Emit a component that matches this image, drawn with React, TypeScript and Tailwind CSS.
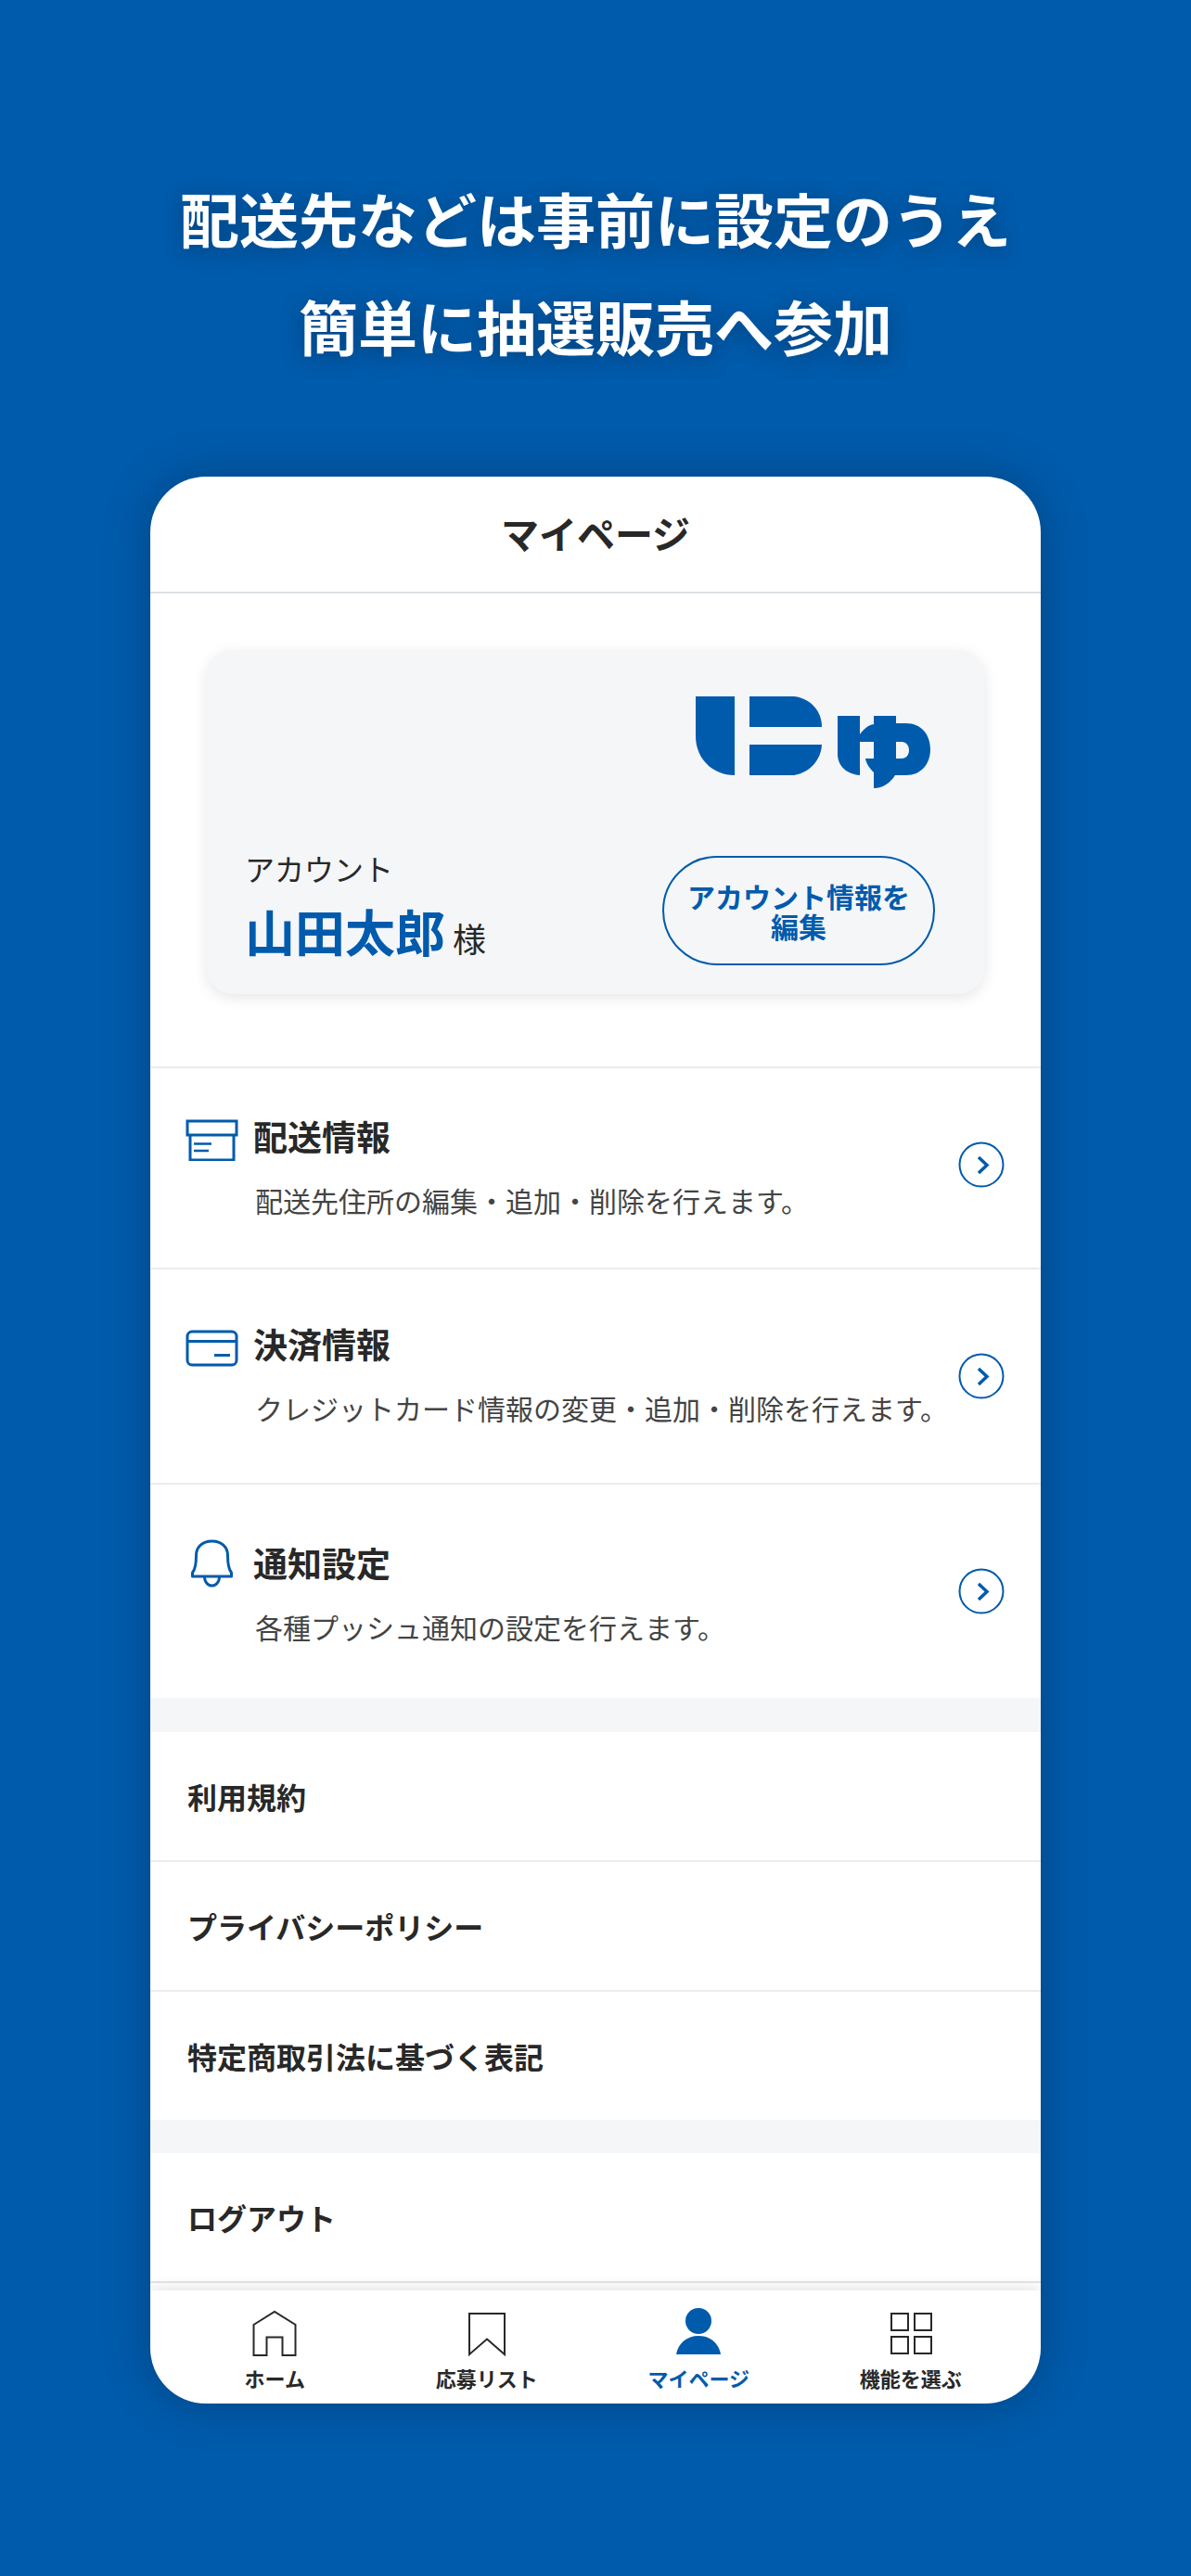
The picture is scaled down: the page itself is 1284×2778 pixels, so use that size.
const FONT = "font-['Noto_Sans_CJK_JP',sans-serif]";

const ShopBoxIcon = () => (
  <svg viewBox="0 0 57 46" className="h-[46px] w-[57px]" fill="none" stroke="currentColor" strokeWidth="3" aria-hidden="true">
    <rect x="2" y="3" width="53" height="15" />
    <path d="M5 18V45H52V18" />
    <path d="M9 27.500H28M9 35H25" strokeWidth="2.500" />
  </svg>
);

const CardIcon = () => (
  <svg viewBox="0 0 57 46" className="h-[46px] w-[57px]" fill="none" stroke="currentColor" strokeWidth="3" aria-hidden="true">
    <rect x="2" y="6" width="53" height="36" rx="5" />
    <path d="M2 16.500H55" />
    <path d="M31 31.500H48" />
  </svg>
);

const BellIcon = () => (
  <svg viewBox="0 0 57 58" className="h-[58px] w-[57px]" fill="none" stroke="currentColor" strokeWidth="3" strokeLinejoin="round" aria-hidden="true">
    <path d="M28.500 2C18 2 11.500 8.500 11.500 17.500C11.500 28 10 33 7.500 36V40H49.500V36C47 33 45.500 28 45.500 17.500C45.500 8.500 39 2 28.500 2Z" />
    <path d="M20.500 41C20.500 45.500 24 50 28.500 50S36.500 45.500 36.500 41" />
  </svg>
);

const HomeIcon = () => (
  <svg viewBox="0 0 50 54" className="h-[54px] w-[50px]" fill="none" stroke="currentColor" strokeWidth="2" aria-hidden="true">
    <path d="M2.500 19L25 5L47.500 19V52H33.500V32.500H16.500V52H2.500Z" />
  </svg>
);

const BookmarkIcon = () => (
  <svg viewBox="0 0 50 54" className="h-[54px] w-[50px]" fill="none" stroke="currentColor" strokeWidth="2" aria-hidden="true">
    <path d="M6 7H44V51L25 34.500L6 51Z" />
  </svg>
);

const PersonIcon = () => (
  <svg viewBox="0 0 50 54" className="h-[54px] w-[50px]" fill="currentColor" aria-hidden="true">
    <circle cx="25" cy="15" r="14" />
    <path d="M1 51C3 39 12.500 31 25 31S47 39 49 51Z" />
  </svg>
);

const GridIcon = () => (
  <svg viewBox="0 0 50 54" className="h-[54px] w-[50px]" fill="none" stroke="currentColor" strokeWidth="2" aria-hidden="true">
    <rect x="4" y="7" width="18" height="18" />
    <rect x="29" y="7" width="18" height="18" />
    <rect x="4" y="32" width="18" height="18" />
    <rect x="29" y="32" width="18" height="18" />
  </svg>
);

const Chevron = () => (
  <svg viewBox="0 0 50 50" className="h-[50px] w-[50px] shrink-0 text-[#005bac]" fill="none" stroke="currentColor" aria-hidden="true">
    <circle cx="25" cy="25" r="23.500" strokeWidth="2" />
    <path d="M22 17L31 25.500L22 34" strokeWidth="3.500" />
  </svg>
);

const Logo = () => (
  <svg viewBox="0 0 254 100" className="h-[100px] w-[254px]" fill="#005bac" role="img" aria-label="にゅ">
    <path d="M0 0H42V85C18 85 0 67 0 43Z" />
    <path d="M58 0H106C123 2 136 15 136 33H58Z" />
    <path d="M58 52H136C135 69 123 82 106 85H58Z" />
    <path d="M153 21H177V41C181 35 186 31 192 30V21H216V29H227C243 29 253 41 253 57S243 85 227 85H215C210 93 202 99 192 99V82C188 78 184 73 183 67H192V49H177V85C163 84 153 75 153 62ZM216 49V67H222C227 67 230 63 230 58S227 49 222 49Z" />
  </svg>
);

const settings = [
  { title: "配送情報", text: "配送先住所の編集・追加・削除を行えます。", Icon: ShopBoxIcon, row: "pb-2", body: "pt-[45px] pb-[42px]" },
  { title: "決済情報", text: "クレジットカード情報の変更・追加・削除を行えます。", Icon: CardIcon, row: "", body: "pt-[52px] pb-[58px]" },
  { title: "通知設定", text: "各種プッシュ通知の設定を行えます。", Icon: BellIcon, row: "", body: "pt-14 pb-[54px]" },
];

const documents = ["利用規約", "プライバシーポリシー", "特定商取引法に基づく表記"];

const tabs = [
  { label: "ホーム", Icon: HomeIcon },
  { label: "応募リスト", Icon: BookmarkIcon },
  { label: "マイページ", Icon: PersonIcon, active: true },
  { label: "機能を選ぶ", Icon: GridIcon },
];

const App = () => {
  return (
    <div lang="ja" className={`${FONT} flex min-h-screen flex-col items-center bg-[#005bac] px-8 pt-[176px] pb-[186px] text-[#282828]`}>
      <h1 className="text-center text-[64px] leading-[116px] font-bold text-white [text-shadow:0_4px_24px_rgba(0,0,0,0.3)]">
        配送先などは事前に設定のうえ
        <br />
        簡単に抽選販売へ参加
      </h1>

      <main className="mt-[106px] w-full max-w-[960px] overflow-hidden rounded-[60px] bg-white shadow-[0_0_50px_rgba(0,0,0,0.25)]">
        <header className="border-b-2 border-[#dce0e4] pt-[30px] pb-[34px]">
          <h2 className="text-center text-[41px] leading-[60px] font-bold">マイページ</h2>
        </header>

        <section className="px-[61px] pt-[61px] pb-[78px]">
          <div className="rounded-[28px] bg-[#f4f6f8] px-[41px] pt-[50px] pb-[30px] shadow-[0_4px_16px_rgba(0,0,0,0.1)]">
            <div className="flex justify-end pr-4">
              <Logo />
            </div>
            <div className="mt-[72px] flex items-start justify-between">
              <div>
                <p className="text-[32px] leading-[26px]">アカウント</p>
                <p className="mt-6 text-[36px] leading-[62px]">
                  <span className="mr-2 text-[54px] font-bold text-[#005bac]">山田太郎</span>様
                </p>
              </div>
              <button
                type="button"
                className="mr-3 w-[294px] rounded-full border-2 border-[#005bac] py-[25px] text-[30px] leading-8 font-bold text-[#005bac]"
              >
                アカウント情報を
                <br />
                編集
              </button>
            </div>
          </div>
        </section>

        <ul>
          {settings.map(({ title, text, Icon, row, body }) => (
            <li key={title} className="border-t-2 border-[#ececee]">
              <a href="#" className={`flex items-center justify-between pr-[39px] pl-[38px] ${row}`}>
                <span className={`flex gap-4 ${body}`}>
                  <span className="flex h-16 items-center text-[#005bac]">
                    <Icon />
                  </span>
                  <span>
                    <span className="block text-[37px] leading-[56px] font-bold">{title}</span>
                    <span className="mt-[18px] block pl-0.5 text-[30px] leading-[46px] text-[#444]">{text}</span>
                  </span>
                </span>
                <Chevron />
              </a>
            </li>
          ))}
        </ul>

        <ul className="divide-y-2 divide-[#ececee] border-t-[37px] border-b-[36px] border-[#f4f6f8]">
          {documents.map((name) => (
            <li key={name}>
              <a href="#" className="block px-10 py-11 text-[32px] leading-[50px] font-bold">
                {name}
              </a>
            </li>
          ))}
        </ul>

        <div className="border-b-2 border-[#e4e4e4]">
          <button type="button" className="block w-full px-10 py-11 text-left text-[32px] leading-[50px] font-bold">
            ログアウト
          </button>
        </div>

        <nav className="mt-2 grid grid-cols-4 pt-[18px] pr-[26px] pb-3 pl-5 shadow-[0_0_16px_rgba(0,0,0,0.15)]">
          {tabs.map(({ label, Icon, active }) => (
            <a key={label} href="#" className={`flex flex-col items-center gap-1.5 text-[22px] leading-8 font-bold ${active ? "text-[#005bac]" : ""}`}>
              <Icon />
              {label}
            </a>
          ))}
        </nav>
      </main>
    </div>
  );
};

export default App;
